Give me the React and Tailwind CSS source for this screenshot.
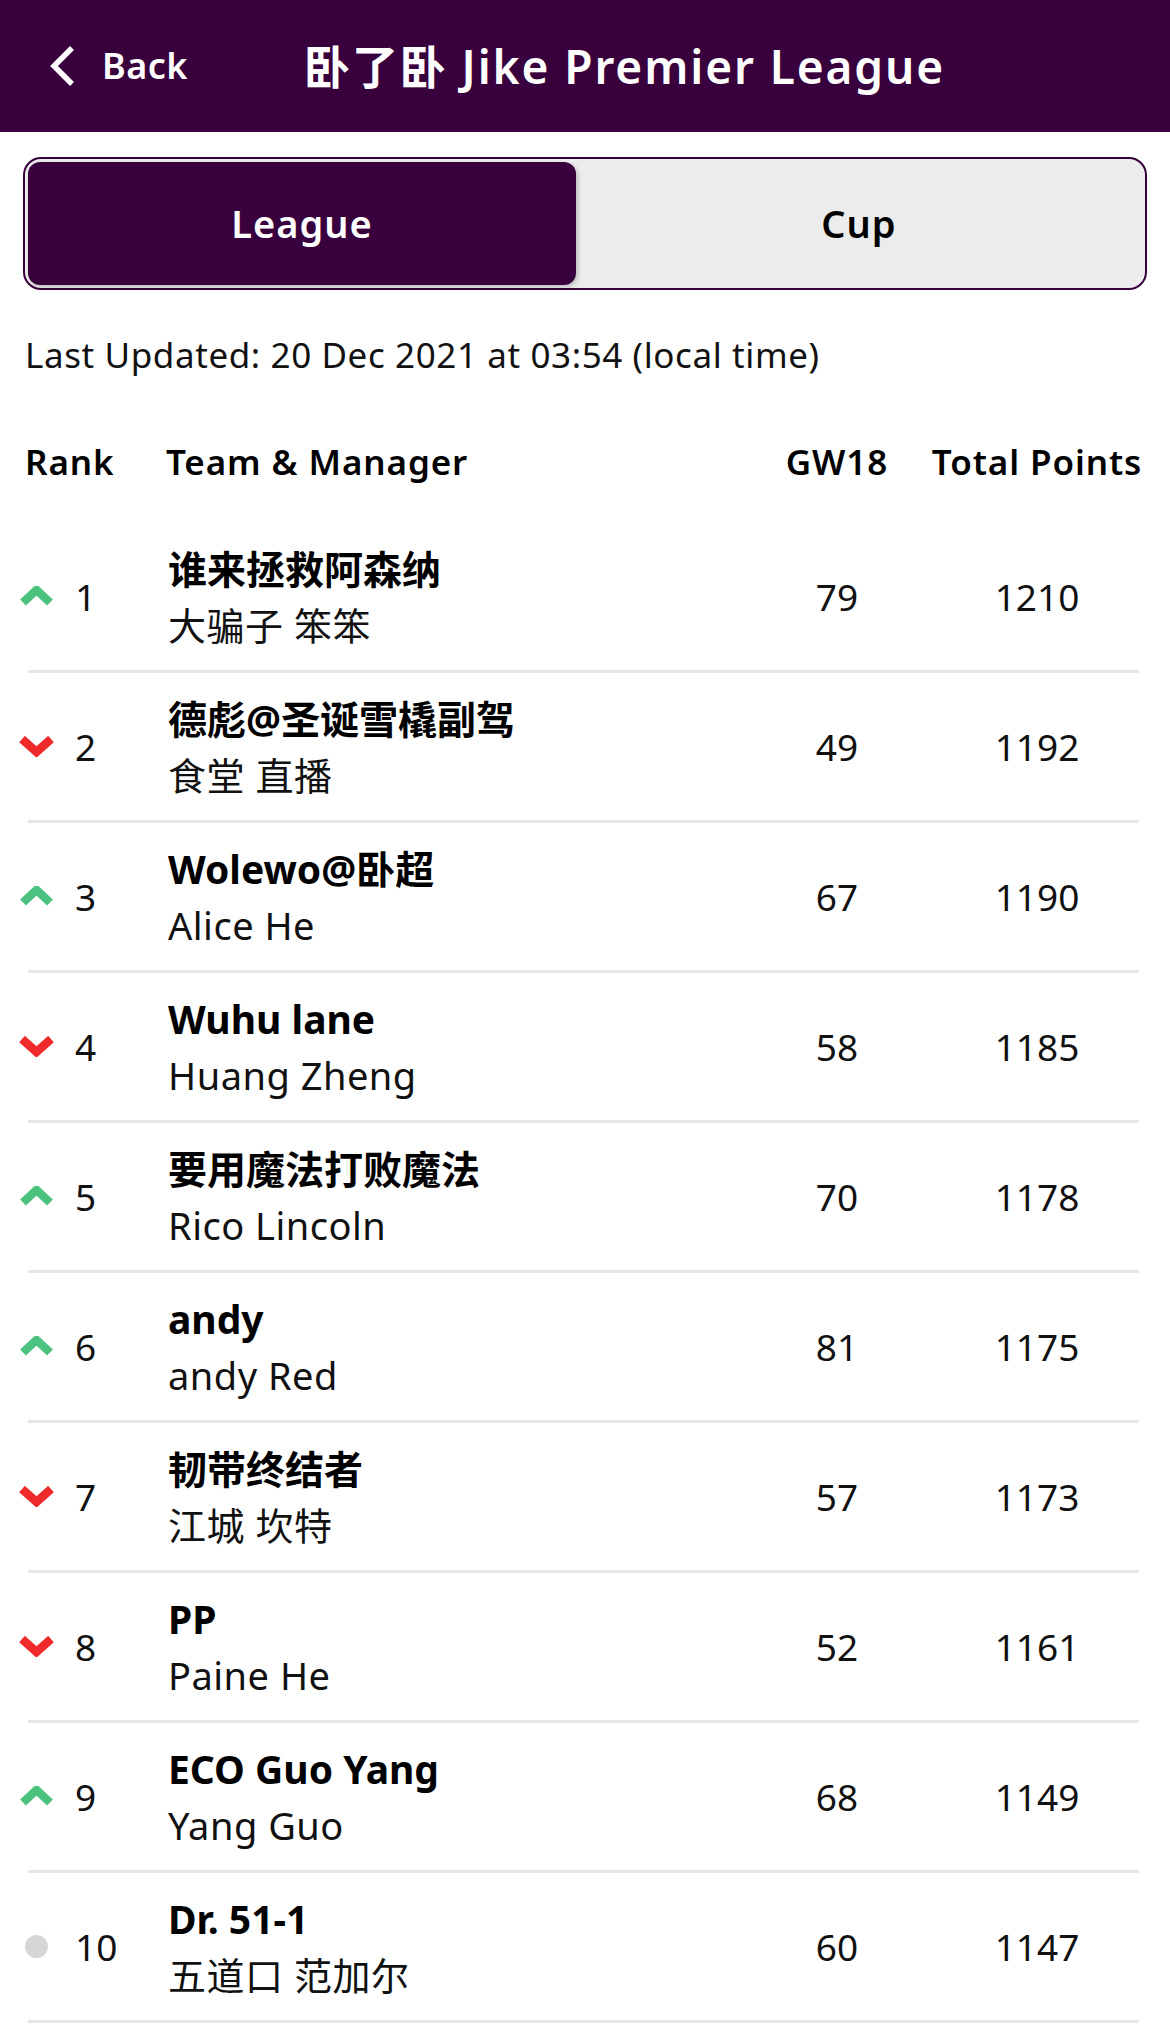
import React from "react";

const rows = [
  { dir: "up", rank: 1, team: "谁来拯救阿森纳", mgr: "大骗子 笨笨", gw: 79, total: 1210 },
  { dir: "down", rank: 2, team: "德彪@圣诞雪橇副驾", mgr: "食堂 直播", gw: 49, total: 1192 },
  { dir: "up", rank: 3, team: "Wolewo@卧超", mgr: "Alice He", gw: 67, total: 1190 },
  { dir: "down", rank: 4, team: "Wuhu lane", mgr: "Huang Zheng", gw: 58, total: 1185 },
  { dir: "up", rank: 5, team: "要用魔法打败魔法", mgr: "Rico Lincoln", gw: 70, total: 1178 },
  { dir: "up", rank: 6, team: "andy", mgr: "andy Red", gw: 81, total: 1175 },
  { dir: "down", rank: 7, team: "韧带终结者", mgr: "江城 坎特", gw: 57, total: 1173 },
  { dir: "down", rank: 8, team: "PP", mgr: "Paine He", gw: 52, total: 1161 },
  { dir: "up", rank: 9, team: "ECO Guo Yang", mgr: "Yang Guo", gw: 68, total: 1149 },
  { dir: "same", rank: 10, team: "Dr. 51-1", mgr: "五道口 范加尔", gw: 60, total: 1147 },
];

function Arrow({ dir }) {
  if (dir === "up")
    return (
      <svg width="35" height="21" viewBox="0 0 35 21">
        <polyline points="4,16.5 17.5,4 31,16.5" fill="none" stroke="#4cc280" strokeWidth="8.5" strokeLinejoin="miter" />
      </svg>
    );
  if (dir === "down")
    return (
      <svg width="35" height="21" viewBox="0 0 35 21">
        <polyline points="3,3 17.5,16 32,3" fill="none" stroke="#ee2a2a" strokeWidth="8.5" strokeLinejoin="miter" />
      </svg>
    );
  return (
    <div className="w-[35px] h-[21px] flex items-center justify-center">
      <div className="w-[23px] h-[23px] rounded-full bg-[#d6d6d6]" />
    </div>
  );
}

export default function App() {
  return (
    <div className="w-[1170px] h-[2030px] bg-white text-[#111] overflow-hidden font-['Noto_Sans','Noto_Sans_CJK_SC',sans-serif]">
      <header className="h-[132px] bg-[#38003c] flex items-center text-white relative">
        <div className="flex items-center pl-[48px]">
          <svg width="28" height="42" viewBox="0 0 28 42">
            <polyline points="24,3 6,21 24,39" fill="none" stroke="white" strokeWidth="5.5" />
          </svg>
          <span className="ml-[26px] text-[36px] font-semibold leading-none tracking-[0.5px]">Back</span>
        </div>
        <div className="absolute left-[304px] top-0 h-[132px] flex items-center text-[46px] font-semibold leading-none tracking-[1.9px]">
          卧了卧 Jike Premier League
        </div>
      </header>

      <div className="px-[23px] pt-[25px]">
        <div className="h-[133px] rounded-[18px] border-[2px] border-[#38003c] bg-[#ececec] p-[3px] flex">
          <div className="w-[548px] h-full rounded-[12px] bg-[#38003c] text-white flex items-center justify-center text-[38px] font-semibold tracking-[1px] shadow-[2px_2px_4px_rgba(0,0,0,0.2)]">
            League
          </div>
          <div className="flex-1 flex items-center justify-center text-[38px] font-semibold tracking-[1px] text-black">Cup</div>
        </div>
      </div>

      <div className="h-[130px] flex items-center pl-[25px] text-[35px] tracking-[0.6px] text-[#111]">
        Last Updated: 20 Dec 2021 at 03:54 (local time)
      </div>

      <div className="h-[103px] flex items-start pt-[22px] pl-[25px] pr-[8px] text-[35px] font-semibold leading-[40px] tracking-[0.9px] text-black">
        <div className="w-[141px]">Rank</div>
        <div className="flex-1">Team &amp; Manager</div>
        <div className="w-[150px] text-center">GW18</div>
        <div className="w-[250px] text-center">Total Points</div>
      </div>

      <div>
        {rows.map((r) => (
          <div key={r.rank} className="h-[150px] flex flex-col">
            <div className="h-[147px] flex items-center pl-[19px] pr-[8px]">
              <div className="w-[35px] flex items-center justify-center">
                <Arrow dir={r.dir} />
              </div>
              <div className="ml-[21px] w-[93px] text-[37px] leading-none">{r.rank}</div>
              <div className="flex-1 flex flex-col">
                <div className="text-[39px] font-bold leading-[56px] text-black">{r.team}</div>
                <div className="text-[38px] leading-[56px] tracking-[0.5px] text-[#111]">{r.mgr}</div>
              </div>
              <div className="w-[150px] text-center text-[37px]">{r.gw}</div>
              <div className="w-[250px] text-center text-[37px]">{r.total}</div>
            </div>
            <div className="h-[3px] bg-[#e6e6e6] ml-[28px] mr-[31px]" />
          </div>
        ))}
      </div>
    </div>
  );
}
